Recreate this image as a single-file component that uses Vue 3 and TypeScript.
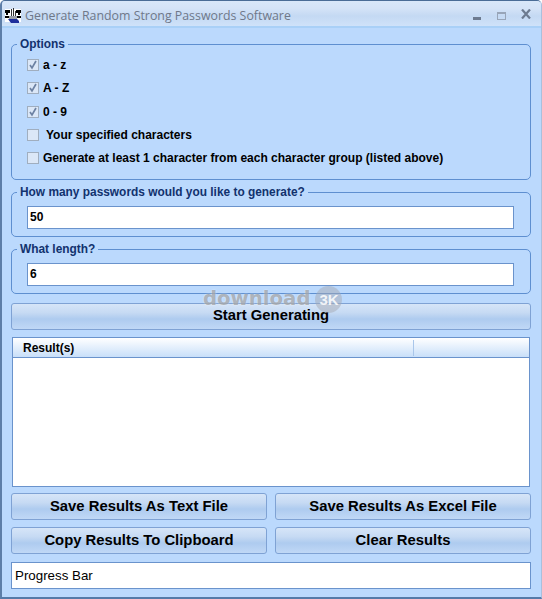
<script setup lang="ts">
const options = [
  { label: 'a - z', checked: true },
  { label: 'A - Z', checked: true },
  { label: '0 - 9', checked: true },
  { label: 'Your specified characters', checked: false, indent: true },
  { label: 'Generate at least 1 character from each character group (listed above)', checked: false },
]
</script>

<template>
  <div class="window">
    <header class="titlebar">
      <svg class="app-icon" width="16" height="16" viewBox="0 0 16 16">
        <rect x="0" y="1" width="16" height="13" fill="#fff" />
        <path d="M0 2h5v3H0zM11 2h5v3h-5zM0 8h4v2H0zM12 8h4v2h-4zM1 5h2v2H1zM13 5h2v2h-2z" fill="#000" />
        <path d="M6 1h1v8H6zM8 0h1v9H8zM10 3h1v6h-1z" fill="#333" />
        <path d="M4 8h8v3H4z" fill="#9a9fa8" />
        <path d="M3 11h9l2 2v2H6z" fill="#1f2f9c" />
      </svg>
      <span class="title">Generate Random Strong Passwords Software</span>
      <div class="controls">
        <span class="min"></span>
        <span class="max"></span>
        <svg class="close" width="10" height="10" viewBox="0 0 10 10">
          <path d="M1 .5l8 9M9 .5l-8 9" stroke="#6d7b90" stroke-width="2.2" fill="none" />
        </svg>
      </div>
    </header>

    <main class="body">
      <fieldset class="group options">
        <legend>Options</legend>
        <label v-for="o in options" :key="o.label" class="check">
          <span class="box">
            <svg v-if="o.checked" width="10" height="10" viewBox="0 0 10 10">
              <path d="M2 5l2 3 4-7" stroke="#6d82a3" stroke-width="1.7" fill="none" />
            </svg>
          </span>
          <span :class="{ indent: o.indent }">{{ o.label }}</span>
        </label>
      </fieldset>

      <fieldset class="group single">
        <legend>How many passwords would you like to generate?</legend>
        <div class="input">50</div>
      </fieldset>

      <fieldset class="group single">
        <legend>What length?</legend>
        <div class="input">6</div>
      </fieldset>

      <button class="btn start">Start Generating</button>

      <section class="results">
        <div class="results-head">
          <span class="col-a">Result(s)</span>
          <span class="col-b"></span>
        </div>
        <div class="results-list"></div>
      </section>

      <div class="actions">
        <button class="btn">Save Results As Text File</button>
        <button class="btn">Save Results As Excel File</button>
        <button class="btn">Copy Results To Clipboard</button>
        <button class="btn">Clear Results</button>
      </div>

      <div class="progress">Progress Bar</div>
    </main>

    <div class="watermark">
      <span class="wm-text">download</span>
      <span class="wm-badge"><span>3K</span></span>
    </div>
  </div>
</template>

<style>
html, body { margin: 0; }
</style>

<style scoped>
.window {
  position: relative;
  width: 542px;
  height: 599px;
  box-sizing: border-box;
  display: flex;
  flex-direction: column;
  background: #bbd9fd;
  border-style: solid;
  border-color: #4a6c96 #a9c0dd #557aa8 #5d7ea8;
  border-width: 1px 1px 2px 2px;
  border-radius: 5px 5px 0 0;
  font-family: "Liberation Sans", Arial, sans-serif;
  color: #000;
  overflow: hidden;
}
.titlebar {
  height: 27px;
  flex: none;
  box-sizing: border-box;
  display: flex;
  align-items: center;
  padding: 4px 0 0 3px;
  background: linear-gradient(#d9e7f9 0%, #d4e3f7 30%, #c4d9f3 60%, #cfe2f9 100%);
  border-bottom: 2px solid #a9d0f7;
}
.app-icon { flex: none; }
.title {
  margin-left: 4px;
  font-family: "Open Sans", sans-serif;
  font-size: 12.37px;
  color: #6f7889;
  white-space: nowrap;
}
.controls {
  margin-left: auto;
  display: flex;
  align-items: center;
  gap: 15px;
  padding-right: 10px;
}
.min { width: 8px; height: 3px; background: #6d7b90; margin-top: 5px; margin-right: 1px; }
.max { width: 7px; height: 5px; border: 1px solid #98a5b8; border-top-width: 2px; }
.close { margin-top: -3px; }
.body {
  flex: 1;
  min-height: 0;
  display: flex;
  flex-direction: column;
  padding: 9px 10px 0 9px;
}
.group {
  margin: 0;
  padding: 0;
  min-width: 0;
  border: 1px solid #5e8fd0;
  border-radius: 5px;
}
.group legend {
  margin-left: -10px;
  padding: 0 3px;
  font-size: 11.9px;
  font-weight: 700;
  color: #12326e;
  line-height: 14px;
}
.options {
  height: 143px;
  box-sizing: border-box;
  display: flex;
  flex-direction: column;
  padding: 7px 0 0 15px;
  gap: 9.3px;
  font-size: 12px;
  font-weight: 700;
}
.check { display: flex; align-items: center; gap: 4px; height: 14px; }
.box {
  width: 12px;
  height: 12px;
  box-sizing: border-box;
  flex: none;
  display: flex;
  align-items: center;
  justify-content: center;
  background: #dbe7f7;
  border: 1px solid #a0aebf;
}
.indent { margin-left: 3px; }
.single {
  height: 52px;
  box-sizing: border-box;
  margin-top: 5px;
  padding: 7px 16px 0 15px;
}
.input {
  height: 23px;
  box-sizing: border-box;
  padding-left: 2px;
  background: #fff;
  border: 1px solid #6a93cc;
  font-size: 12px;
  font-weight: 700;
  line-height: 21px;
}
.btn {
  display: block;
  width: 100%;
  height: 27px;
  padding: 0 0 2px;
  border: 1px solid #7fa2d4;
  border-radius: 3px;
  background: linear-gradient(#d6e5f8 0%, #c6daf3 35%, #aecbef 60%, #c0d8f6 100%);
  font-family: inherit;
  font-size: 14.83px;
  font-weight: 700;
  color: #000;
}
.start { margin-top: 9px; flex: none; padding-bottom: 4px; }
.results {
  margin: 7px 1px 0 1px;
  height: 150px;
  flex: none;
  box-sizing: border-box;
  display: flex;
  flex-direction: column;
  background: #fff;
  border: 1px solid #6a93cc;
}
.results-head {
  height: 20px;
  flex: none;
  box-sizing: border-box;
  display: flex;
  align-items: center;
  padding-top: 1px;
  background: linear-gradient(#ffffff, #c8dff9);
  border-bottom: 1px solid #6a93cc;
  font-size: 12px;
  font-weight: 700;
}
.col-a { width: 401px; padding-left: 10px; box-sizing: border-box; border-right: 1px solid #a9c6ea; line-height: 16px; }
.col-b { flex: 1; }
.results-list { flex: 1; }
.actions {
  margin-top: 6px;
  display: grid;
  grid-template-columns: 1fr 1fr;
  gap: 7px 8px;
}
.progress {
  margin-top: 8px;
  height: 27px;
  flex: none;
  box-sizing: border-box;
  padding-left: 3px;
  background: #fff;
  border: 1px solid #6a93cc;
  font-size: 13.33px;
  line-height: 25px;
}
.watermark {
  position: absolute;
  left: 201px;
  top: 285px;
  display: flex;
  align-items: center;
  gap: 5px;
  pointer-events: none;
}
.wm-text {
  font-family: "DejaVu Sans", sans-serif;
  font-size: 19.7px;
  font-weight: 700;
  line-height: 16px;
  margin-top: -2px;
  color: rgba(130, 130, 130, 0.55);
  text-shadow: 0 0 2px rgba(255, 255, 255, 0.6);
}
.wm-badge {
  width: 27px;
  height: 27px;
  border-radius: 50%;
  display: flex;
  align-items: center;
  justify-content: center;
  background: rgba(165, 170, 180, 0.5);
  color: rgba(255, 255, 255, 0.85);
  font-size: 15px;
  font-weight: 700;
  line-height: 16px;
}
</style>
